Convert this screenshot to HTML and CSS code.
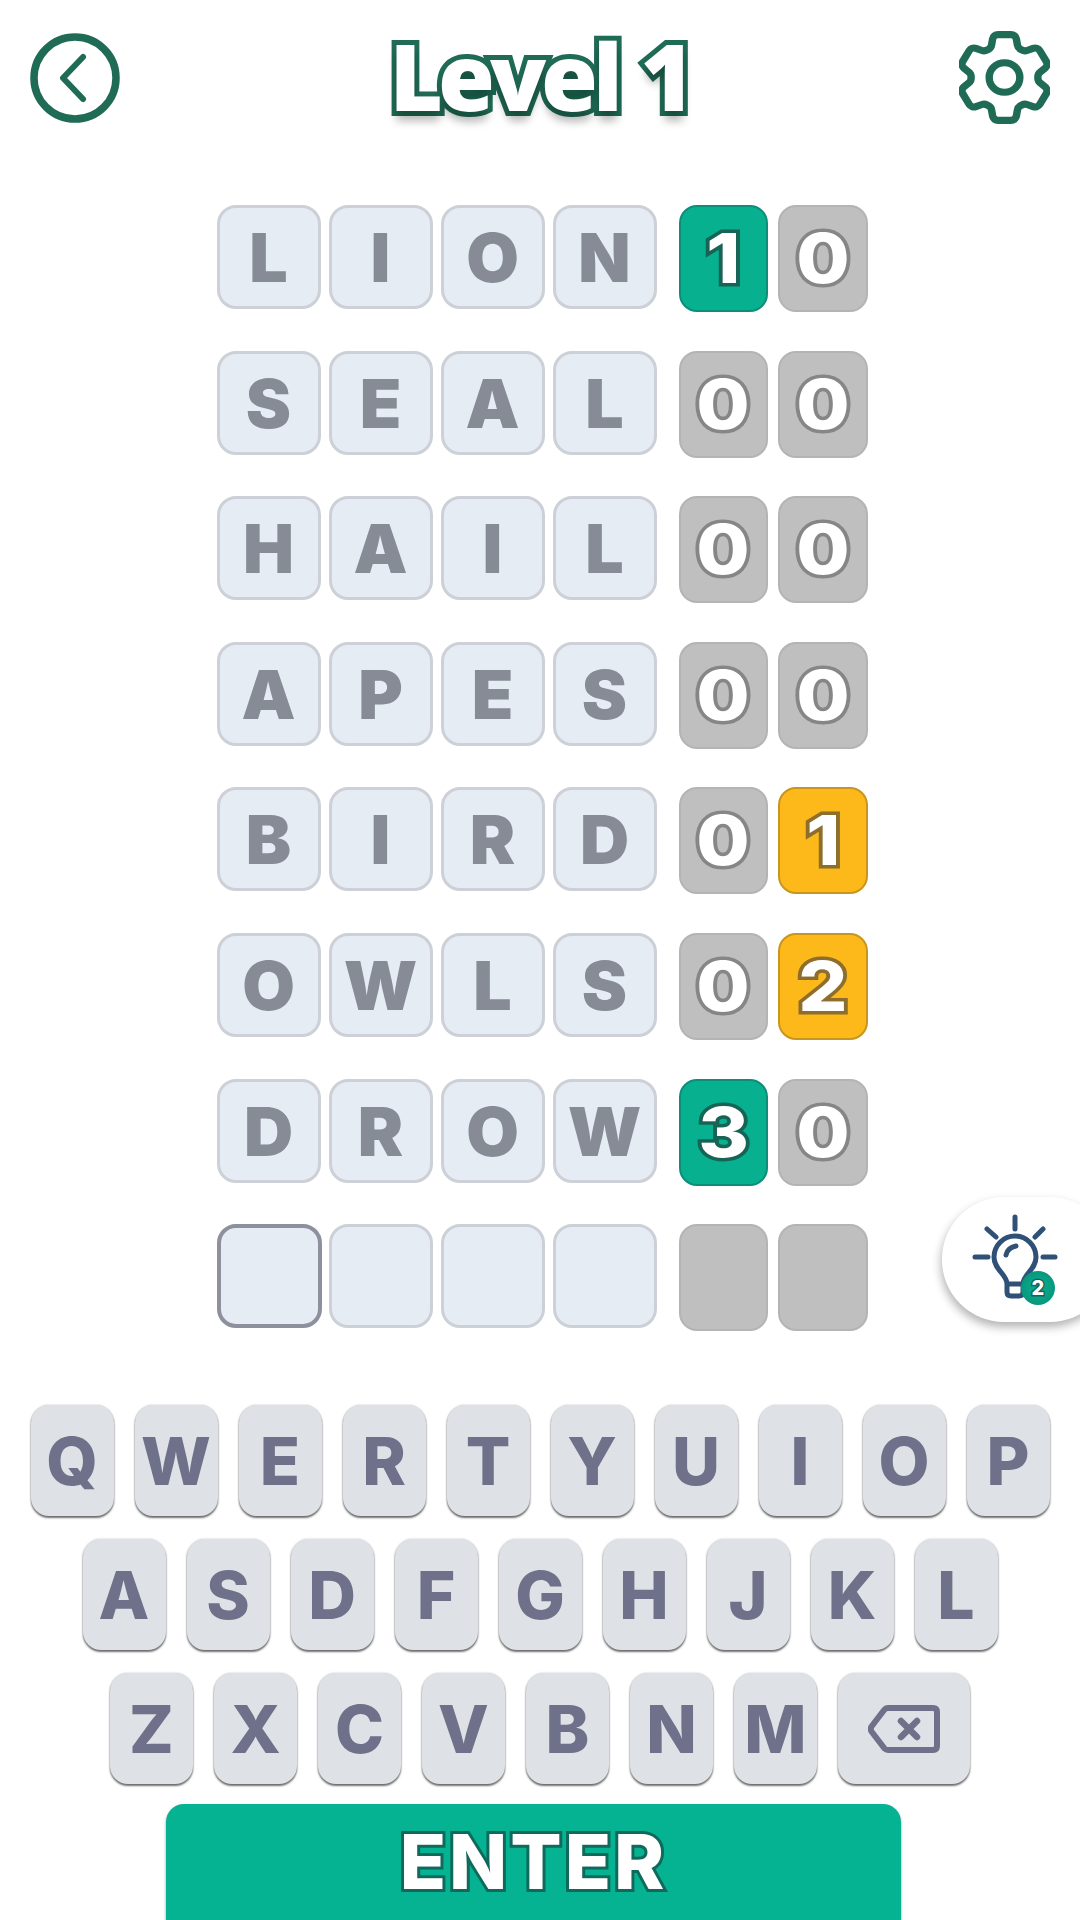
FILE: index.html
```html
<!DOCTYPE html>
<html lang="en">
<head>
<meta charset="utf-8">
<title>Level 1</title>
<link rel="stylesheet" href="styles.css">
</head>
<body>
<div class="screen">
  <header class="top">
    <svg class="back" viewBox="0 0 90 90" fill="none"><circle cx="45" cy="45" r="41" class="ico"/><path d="M53 24 L33 45 L53 66" class="ico chev"/></svg>
    <h1 class="title">Level 1</h1>
    <svg class="gear" viewBox="2.8 2.25 18.4 19.5" preserveAspectRatio="none" fill="none"><path class="gear-line" d="M9.594 3.94c.09-.542.56-.94 1.11-.94h2.593c.55 0 1.02.398 1.11.94l.213 1.281c.063.374.313.686.645.87.074.04.147.083.22.127.325.196.72.257 1.075.124l1.217-.456a1.125 1.125 0 0 1 1.37.49l1.296 2.247a1.125 1.125 0 0 1-.26 1.431l-1.003.827c-.293.241-.438.613-.43.992a7.723 7.723 0 0 1 0 .255c-.008.378.137.75.43.991l1.004.827c.424.35.534.955.26 1.43l-1.298 2.247a1.125 1.125 0 0 1-1.369.491l-1.217-.456c-.355-.133-.75-.072-1.076.124a6.47 6.47 0 0 1-.22.128c-.331.183-.581.495-.644.869l-.213 1.281c-.09.543-.56.94-1.11.94h-2.594c-.55 0-1.019-.398-1.11-.94l-.213-1.281c-.062-.374-.312-.686-.644-.87a6.52 6.52 0 0 1-.22-.127c-.325-.196-.72-.257-1.076-.124l-1.217.456a1.125 1.125 0 0 1-1.369-.49l-1.297-2.247a1.125 1.125 0 0 1 .26-1.431l1.004-.827c.292-.24.437-.613.43-.991a6.932 6.932 0 0 1 0-.255c.007-.38-.138-.751-.43-.992l-1.004-.827a1.125 1.125 0 0 1-.26-1.43l1.297-2.247a1.125 1.125 0 0 1 1.37-.491l1.216.456c.356.133.751.072 1.076-.124.072-.044.146-.086.22-.128.332-.183.582-.495.644-.869l.214-1.28Z"/><circle class="gear-line" cx="12" cy="12" r="3.1"/></svg>
  </header>

  <main class="board">
    <div class="row"><div class="tile">L</div><div class="tile">I</div><div class="tile">O</div><div class="tile">N</div><div class="score green"><span class="digit">1</span></div><div class="score grey"><span class="digit">0</span></div></div>
    <div class="row"><div class="tile">S</div><div class="tile">E</div><div class="tile">A</div><div class="tile">L</div><div class="score grey"><span class="digit">0</span></div><div class="score grey"><span class="digit">0</span></div></div>
    <div class="row"><div class="tile">H</div><div class="tile">A</div><div class="tile">I</div><div class="tile">L</div><div class="score grey"><span class="digit">0</span></div><div class="score grey"><span class="digit">0</span></div></div>
    <div class="row"><div class="tile">A</div><div class="tile">P</div><div class="tile">E</div><div class="tile">S</div><div class="score grey"><span class="digit">0</span></div><div class="score grey"><span class="digit">0</span></div></div>
    <div class="row"><div class="tile">B</div><div class="tile">I</div><div class="tile">R</div><div class="tile">D</div><div class="score grey"><span class="digit">0</span></div><div class="score yellow"><span class="digit">1</span></div></div>
    <div class="row"><div class="tile">O</div><div class="tile">W</div><div class="tile">L</div><div class="tile">S</div><div class="score grey"><span class="digit">0</span></div><div class="score yellow"><span class="digit">2</span></div></div>
    <div class="row"><div class="tile">D</div><div class="tile">R</div><div class="tile">O</div><div class="tile">W</div><div class="score green"><span class="digit">3</span></div><div class="score grey"><span class="digit">0</span></div></div>
    <div class="row"><div class="tile active"></div><div class="tile"></div><div class="tile"></div><div class="tile"></div><div class="score grey"></div><div class="score grey"></div></div>
  </main>

  <aside class="hint">
    <svg class="bulb" viewBox="0 0 90 90" fill="none">
      <path class="bulb-line" d="M45 5V17M5 45H18M73 45H85M17 17L26 25M73 17L65 25"/>
      <path class="bulb-line" d="M37 72C37 62 24 58 24 45A21 21 0 0 1 66 45C66 58 53 62 53 72V80Q53 84 49 84H41Q37 84 37 80ZM37 72H53M36 43C37 38 41 35 46 34"/>
    </svg>
    <span class="badge">2</span>
  </aside>

  <section class="keyboard">
    <div class="keys"><div class="key">Q</div><div class="key">W</div><div class="key">E</div><div class="key">R</div><div class="key">T</div><div class="key">Y</div><div class="key">U</div><div class="key">I</div><div class="key">O</div><div class="key">P</div></div>
    <div class="keys"><div class="key">A</div><div class="key">S</div><div class="key">D</div><div class="key">F</div><div class="key">G</div><div class="key">H</div><div class="key">J</div><div class="key">K</div><div class="key">L</div></div>
    <div class="keys"><div class="key">Z</div><div class="key">X</div><div class="key">C</div><div class="key">V</div><div class="key">B</div><div class="key">N</div><div class="key">M</div>
      <div class="key wide"><svg class="bksp" viewBox="0 0 72 48" fill="none"><path class="bksp-line" d="M20 3H65Q69 3 69 7V41Q69 45 65 45H20Q18 45 16.500 43.500L3.500 26.500Q2 24 3.500 21.500L16.500 4.500Q18 3 20 3Z"/><path class="bksp-x" d="M33 16L49 32M49 16L33 32"/></svg></div>
    </div>
    <div class="enter"><span class="enter-label">ENTER</span></div>
  </section>
</div>
</body>
</html>
```
FILE: styles.css
```css
* { box-sizing: border-box; }
html, body { margin: 0; padding: 0; background: #fff; }
.screen {
  position: relative;
  width: 1080px;
  height: 1920px;
  overflow: hidden;
  background: #fff;
  font-family: Inter, "Liberation Sans", sans-serif;
}

/* header */
.top {
  display: flex;
  justify-content: space-between;
  align-items: center;
  height: 93px;
  margin: 31px 30px 81px;
}
.back { width: 90px; height: 90px; }
.ico { stroke: #1f6b55; stroke-width: 7.5; stroke-linecap: round; stroke-linejoin: round; }
.chev { stroke-width: 6; }
.gear { width: 91px; height: 93px; }
.gear-line { stroke: #1f6b55; stroke-width: 1.5; }
.title {
  margin: 0;
  padding-bottom: 4px;
  font-family: "Open Sans", sans-serif;
  font-weight: 800;
  font-size: 92px;
  line-height: 89px;
  letter-spacing: -5px;
  word-spacing: 4px;
  color: #fff;
  -webkit-text-stroke: 10px #1f6b55;
  paint-order: stroke fill;
  text-shadow: 0 10px 8px rgba(0, 0, 0, .28);
}

/* board */
.board {
  display: flex;
  flex-direction: column;
  gap: 38.6px;
  margin-left: 216.500px;
  filter: blur(.7px);
}
.row {
  display: flex;
  align-items: flex-start;
  gap: 8px;
  height: 107px;
}
.tile {
  display: flex;
  align-items: center;
  justify-content: center;
  width: 104px;
  height: 104px;
  border: 3px solid #cdd0d6;
  border-radius: 19px;
  background: #e6ecf4;
  color: #868b96;
  font-weight: 900;
  font-size: 68px;
  line-height: 1;
}
.tile.active { width: 105px; margin-right: -1px; border: 4px solid #8e909d; }
.score {
  display: flex;
  align-items: center;
  justify-content: center;
  width: 89.5px;
  height: 107px;
  border: 2px solid;
  border-radius: 18px;
  font-weight: 800;
  font-size: 69px;
  line-height: 1;
  -webkit-text-fill-color: #fff;
  -webkit-text-stroke: 7px currentColor;
  paint-order: stroke fill;
}
.digit { display: block; transform: scaleX(1.12); }
.tile + .score { margin-left: 14px; }
.score + .score { margin-left: 2px; }
.green { background: #07b190; border-color: #0c8f78; color: #176457; }
.grey { background: #bfbfbf; border-color: #b4b4b4; color: #868686; }
.yellow { background: #fdb91a; border-color: #c8951f; color: #8d6e2c; }

/* hint */
.hint {
  position: absolute;
  left: 942px;
  top: 1197px;
  width: 170px;
  height: 125px;
  border-radius: 62px;
  background: #fff;
  box-shadow: -1px 5px 10px rgba(0, 0, 0, .3);
}
.bulb { position: absolute; left: 28px; top: 15px; width: 90px; height: 90px; }
.bulb-line { stroke: #2f5178; stroke-width: 5; stroke-linecap: round; stroke-linejoin: round; }
.badge {
  position: absolute;
  left: 79px;
  top: 74px;
  display: flex;
  align-items: center;
  justify-content: center;
  width: 34px;
  height: 34px;
  border-radius: 50%;
  background: radial-gradient(circle, #07a488 40%, #0a8a72);
  color: #fff;
  font-weight: 800;
  font-size: 20px;
  -webkit-text-stroke: 3px #176457;
  paint-order: stroke fill;
}

/* keyboard */
.keyboard {
  display: flex;
  flex-direction: column;
  gap: 23px;
  margin-top: 74px;
}
.keys {
  display: flex;
  justify-content: center;
  gap: 21px;
}
.key {
  display: flex;
  align-items: center;
  justify-content: center;
  width: 83px;
  height: 111px;
  border-radius: 18px;
  background: #dee2e6;
  color: #6e7189;
  font-weight: 800;
  font-size: 66px;
  line-height: 1;
  box-shadow: 0 2px 2px rgba(0, 0, 0, .55), 0 0 2px rgba(0, 0, 0, .25);
}
.key.wide { width: 132px; }
.bksp { width: 72px; height: 48px; }
.bksp-line { stroke: #6e7189; stroke-width: 6; stroke-linejoin: round; }
.bksp-x { stroke: #6e7189; stroke-width: 6.5; stroke-linecap: round; }
.enter {
  display: flex;
  justify-content: center;
  width: 735px;
  height: 136px;
  margin: -3px 0 0 166px;
  padding-top: 19px;
  border-radius: 18px;
  background: #05b292;
  box-shadow: 0 2px 3px rgba(0, 0, 0, .4);
}
.enter-label {
  font-family: Inter, sans-serif;
  font-weight: 800;
  font-size: 76px;
  line-height: 76px;
  letter-spacing: 3px;
  color: #fff;
  -webkit-text-stroke: 6px #0f6a5b;
  paint-order: stroke fill;
}
```
